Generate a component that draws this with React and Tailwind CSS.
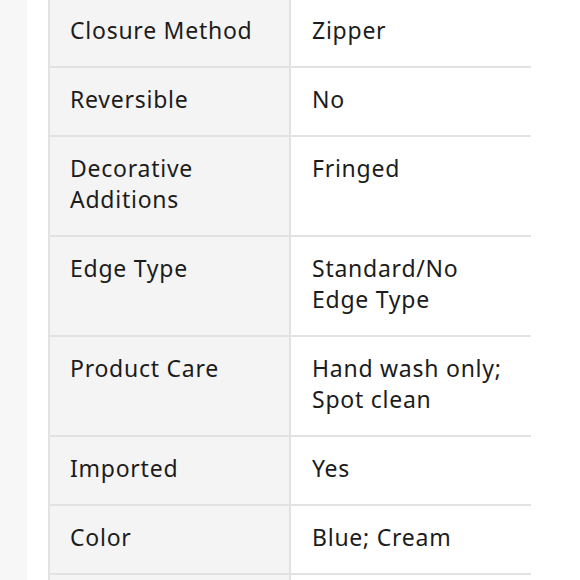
export default function App() {
  const rows = [
    ["Closure Method", "Zipper"],
    ["Reversible", "No"],
    ["Decorative Additions", "Fringed"],
    ["Edge Type", "Standard/No Edge Type"],
    ["Product Care", "Hand wash only; Spot clean"],
    ["Imported", "Yes"],
    ["Color", "Blue; Cream"],
    ["", ""],
  ];
  return (
    <div className="w-[580px] h-[580px] overflow-hidden bg-white flex" style={{ fontFamily: "'Noto Sans', Lato, sans-serif" }}>
      <div className="w-[27px] h-full bg-[#f7f7f7] shrink-0" />
      <div className="w-[21px] shrink-0" />
      <div className="w-[483px] shrink-0 mt-[-3px]">
        <div className="grid grid-cols-[241px_240px] border-l-2 border-r-2 border-t-2 border-[#e2e2e2]">
          {rows.map(([k, v], i) => (
            <div key={i} className="contents">
              <div className="bg-[#f4f4f4] border-b-2 border-r-2 border-[#e2e2e2] pl-[20px] pr-1 pt-[16px] pb-[20px] text-[23px] leading-[31px] tracking-[0.75px] text-[#1c1c1c]">
                {k === "Decorative Additions" ? (<>Decorative<br />Additions</>) : k || "\u00a0"}
              </div>
              <div className="bg-white border-b-2 border-[#e2e2e2] pl-[21px] pr-1 pt-[16px] pb-[20px] text-[23px] leading-[31px] tracking-[0.75px] text-[#1c1c1c]">
                {v === "Standard/No Edge Type" ? (<>Standard/No<br />Edge Type</>) : v === "Hand wash only; Spot clean" ? (<>Hand wash only;<br />Spot clean</>) : v || "\u00a0"}
              </div>
            </div>
          ))}
        </div>
      </div>
      <div className="flex-1" />
    </div>
  );
}
